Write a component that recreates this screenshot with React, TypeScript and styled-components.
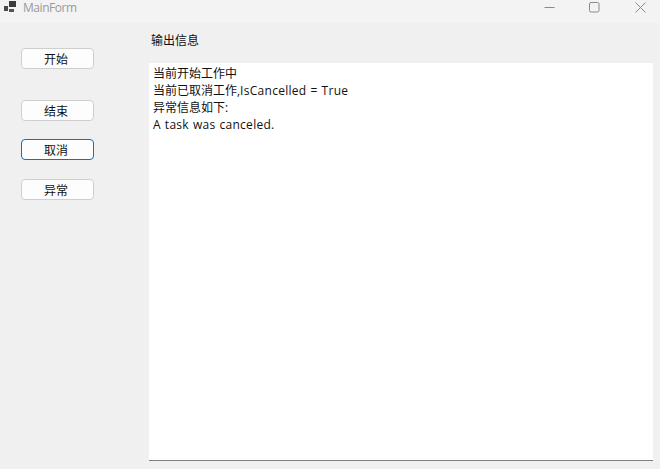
import { createGlobalStyle } from "styled-components";
import styled from "styled-components";

const GlobalStyle = createGlobalStyle`
html, body {
  margin: 0;
  padding: 0;
  background: #f0f0f0;
}
`

const FONT = `"Open Sans", "Noto Sans CJK SC", sans-serif`

const Window = styled.div`
width: 660px;
height: 469px;
overflow: hidden;
display: flex;
flex-direction: column;
background: #f0f0f0;
font-family: ${FONT};
font-size: 12px;
color: #111;
`

const TitleBar = styled.div`
height: 23px;
flex: none;
display: flex;
align-items: center;
background: #f3f3f3;
padding-left: 4px;
`

const AppIcon = styled.svg`
width: 13px;
height: 13px;
flex: none;
margin-top: -8px;
`

const TitleText = styled.span`
margin-left: 6px;
margin-top: -8px;
font-size: 12px;
letter-spacing: -0.45px;
color: #9a9a9a;
`

const WindowControls = styled.div`
margin-left: auto;
display: flex;
align-items: center;
margin-top: -8px;
`

const ControlIcon = styled.svg<{ $gap: number }>`
width: 11px;
height: 11px;
flex: none;
margin-right: ${p => p.$gap}px;
`

const Body = styled.div`
flex: 1;
display: flex;
`

const Sidebar = styled.div`
width: 149px;
flex: none;
box-sizing: border-box;
padding: 25px 0 0 21px;
display: flex;
flex-direction: column;
align-items: flex-start;
`

const ActionButton = styled.button<{ $top: number; $focused?: boolean }>`
width: 73px;
height: 21px;
box-sizing: border-box;
margin: ${p => p.$top}px 0 0;
padding: 1px 3px 0 0;
background: #fdfdfd;
border: 1px solid ${p => (p.$focused ? "#1a6fb5" : "#cfcfcf")};
border-radius: 4px;
font-family: inherit;
font-size: 12px;
color: #111;
line-height: 19px;
`

const Main = styled.div`
flex: 1;
display: flex;
flex-direction: column;
padding-right: 7px;
`

const OutputLabel = styled.div`
height: 40px;
box-sizing: border-box;
padding: 9px 0 0 2px;
line-height: 17px;
color: #111;
`

const OutputBox = styled.div`
height: 398px;
box-sizing: border-box;
background: #fff;
border-bottom: 1px solid #808080;
padding: 2px 4px;
`

const OutputLine = styled.div`
line-height: 17px;
height: 17px;
white-space: pre;
`

const Latin = styled.span`
letter-spacing: 0.28px;
word-spacing: 0.6px;
`

const buttons = [
    { label: "开始", top: 0 },
    { label: "结束", top: 31 },
    { label: "取消", top: 18, focused: true },
    { label: "异常", top: 19 },
]

export default function App() {
    return (
        <Window>
            <GlobalStyle />
            <TitleBar>
                <AppIcon viewBox="0 0 13 13">
                    <rect x="0" y="5" width="4" height="5" fill="#4a4a4a" />
                    <rect x="5" y="0" width="7" height="6" fill="#3c3c3c" />
                    <rect x="5" y="8" width="5" height="3" fill="#555" />
                </AppIcon>
                <TitleText>MainForm</TitleText>
                <WindowControls>
                    <ControlIcon viewBox="0 0 11 11" $gap={34}>
                        <line x1="0.5" y1="5.5" x2="10.5" y2="5.5" stroke="#8a8a8a" />
                    </ControlIcon>
                    <ControlIcon viewBox="0 0 11 11" $gap={35}>
                        <rect x="0.5" y="0.5" width="9.5" height="9.5" rx="1.5" fill="none" stroke="#8a8a8a" />
                    </ControlIcon>
                    <ControlIcon viewBox="0 0 11 11" $gap={14}>
                        <path d="M0.5 0.5 L10.5 10.5 M10.5 0.5 L0.5 10.5" stroke="#8a8a8a" />
                    </ControlIcon>
                </WindowControls>
            </TitleBar>
            <Body>
                <Sidebar>
                    {buttons.map(b => (
                        <ActionButton key={b.label} $top={b.top} $focused={b.focused}>
                            {b.label}
                        </ActionButton>
                    ))}
                </Sidebar>
                <Main>
                    <OutputLabel>输出信息</OutputLabel>
                    <OutputBox>
                        <OutputLine>当前开始工作中</OutputLine>
                        <OutputLine>当前已取消工作,<Latin>IsCancelled = True</Latin></OutputLine>
                        <OutputLine>异常信息如下:</OutputLine>
                        <OutputLine><Latin>A task was canceled.</Latin></OutputLine>
                    </OutputBox>
                </Main>
            </Body>
        </Window>
    )
}
